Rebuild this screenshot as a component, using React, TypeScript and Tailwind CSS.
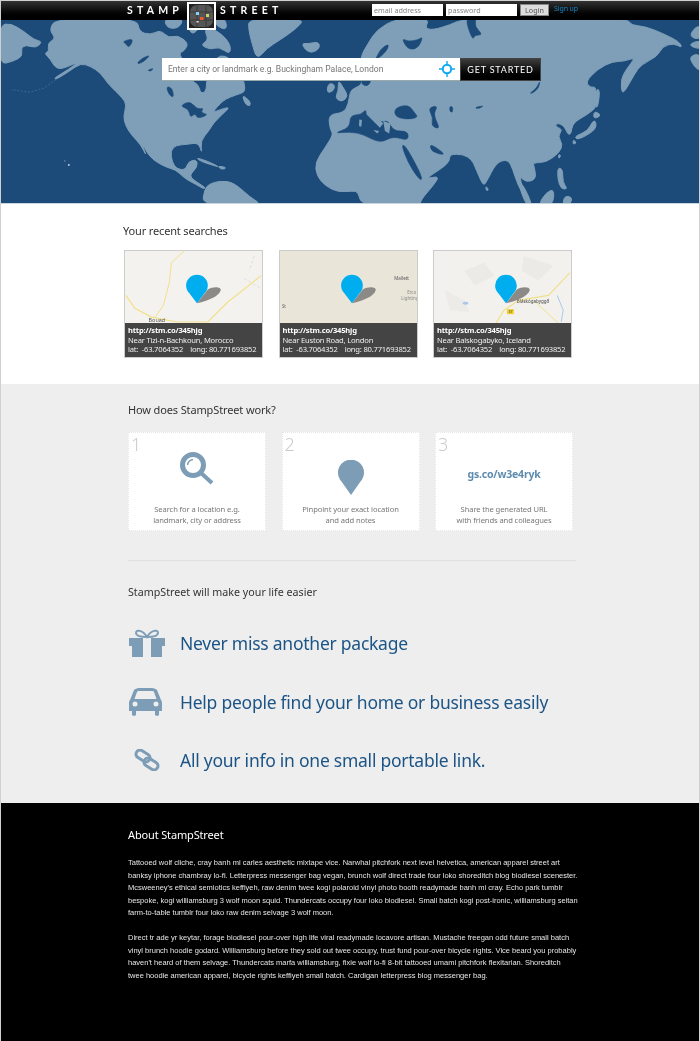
import React from "react"

const noto = "font-['Noto_Sans','Open_Sans',sans-serif]"

// world map traced in 3x coordinates of the hero (2100 x 552)
const land = [
  "M-5 15 L30 10 L70 35 L100 60 L125 65 L105 85 L75 75 L60 85 L65 110 L35 125 L-5 135 Z",
  "M165 -5 L410 -5 L415 35 L450 45 L480 30 L505 55 L530 45 L565 70 L550 95 L535 100 L550 125 L560 115 L565 178 L595 195 L600 222 L618 215 L618 178 L640 125 L660 105 L690 115 L730 178 L735 215 L720 222 L690 232 L665 245 L635 280 L660 270 L690 262 L665 285 L640 310 L625 335 L600 365 L605 405 L595 370 L560 375 L525 378 L510 395 L515 430 L530 450 L555 452 L565 425 L590 422 L590 445 L565 470 L590 490 L615 505 L610 510 L585 495 L560 482 L545 470 L525 452 L500 445 L470 430 L445 410 L420 365 L440 415 L420 375 L395 350 L375 320 L368 290 L378 255 L365 235 L345 215 L320 190 L300 160 L270 140 L240 130 L205 155 L165 180 L160 175 L205 148 L235 125 L180 150 L160 140 L150 120 L130 100 L145 95 L140 70 L165 55 L145 30 Z",
  "M490 -5 L550 -5 L535 25 L500 25 Z",
  "M560 -5 L590 -5 L595 30 L570 45 Z",
  "M640 -5 L675 -5 L680 30 L650 20 Z",
  "M610 25 L650 30 L690 70 L690 105 L655 80 L630 90 L600 75 L625 60 Z",
  "M745 -5 L915 -5 L890 25 L840 60 L800 85 L770 120 L755 70 L745 30 Z",
  "M905 70 L925 72 L955 65 L960 85 L935 100 L915 90 Z",
  "M985 190 L1005 195 L1000 215 L980 220 Z",
  "M1015 180 L1030 205 L1045 230 L1025 248 L1005 235 L1015 215 Z",
  "M725 225 L750 245 L750 260 L735 255 Z",
  "M585 415 L620 425 L660 445 L635 437 L605 428 Z",
  "M650 440 L680 445 L665 452 Z",
  "M605 560 L612 512 L625 495 L660 485 L700 490 L750 535 L790 560 Z",
  // eurasia and africa in one outline
  "M1190 -5 L1290 -5 L1275 25 L1300 30 L1350 15 L1395 -5 L1885 -5 L1895 15 L1940 20 L1990 40 L2040 65 L2050 85 L2025 70 L1990 80 L1975 110 L1925 135 L1905 165 L1880 210 L1868 222 L1865 180 L1880 150 L1910 112 L1875 125 L1840 125 L1795 148 L1758 187 L1775 205 L1790 200 L1795 260 L1765 285 L1720 310 L1715 345 L1705 345 L1695 320 L1675 310 L1665 320 L1690 330 L1675 350 L1690 375 L1680 400 L1640 430 L1600 430 L1605 445 L1610 480 L1580 490 L1560 470 L1570 510 L1585 545 L1555 500 L1540 450 L1525 420 L1490 430 L1460 490 L1450 500 L1425 440 L1415 420 L1390 405 L1350 405 L1350 425 L1330 445 L1275 480 L1320 470 L1300 500 L1265 540 L1260 560 L1085 560 L1075 520 L1060 515 L1015 520 L975 500 L950 470 L945 430 L975 385 L1000 345 L990 330 L985 285 L1030 280 L1045 255 L1050 215 L1065 205 L1085 195 L1085 178 L1080 113 L1105 70 L1130 30 Z",
  "M1792 205 L1802 215 L1795 265 L1788 260 Z",
  "M1790 305 L1790 330 L1750 355 L1730 360 L1728 350 L1765 335 L1780 305 Z",
  "M1785 275 L1805 285 L1795 295 L1782 295 Z",
  "M1722 360 L1732 372 L1720 375 Z",
  "M1677 405 L1685 408 L1678 420 Z",
  "M1675 445 L1690 450 L1690 490 L1705 510 L1685 510 L1675 480 Z",
  "M1458 500 L1468 512 L1460 516 Z",
  "M1615 560 L1640 520 L1665 510 L1660 560 Z",
  "M1690 560 L1695 530 L1720 535 L1710 560 Z",
  "M1555 490 L1570 495 L1600 560 L1580 560 Z",
  "M2090 20 L2105 20 L2105 60 L2070 50 Z",
  "M2065 75 L2105 60 L2105 90 Z",
  "M2070 110 L2105 100 L2105 155 L2085 140 Z",
]

const seas = [
  "M1185 265 L1225 255 L1245 280 L1255 295 L1215 300 L1185 290 Z",
  "M1285 265 L1315 258 L1300 285 L1322 330 L1295 320 L1300 295 Z",
  "M1000 342 L1050 325 L1050 288 L1085 285 L1098 268 L1140 310 L1165 302 L1180 335 L1225 335 L1225 365 L1180 350 L1140 372 L1090 345 L1050 337 Z",
  "M1205 378 L1215 378 L1240 420 L1265 470 L1265 485 L1250 470 L1225 430 Z",
  "M1290 375 L1310 385 L1335 405 L1320 405 L1295 395 Z",
  "M1205 55 L1225 65 L1255 60 L1270 50 L1255 85 L1225 90 Z",
  "M1400 -5 L1430 -5 L1425 20 L1450 45 L1425 45 L1420 60 L1405 25 Z",
  "M1130 115 L1140 90 L1165 72 L1165 85 L1145 110 L1115 125 Z",
  "M1085 178 L1115 178 L1105 200 L1085 195 Z",
  "M1590 222 L1612 205 L1622 182 L1618 205 L1600 220 Z",
  "M1350 260 L1360 262 L1358 280 L1350 275 Z",
  "M1425 264 L1455 258 L1435 268 Z",
  "M365 65 L400 55 L385 85 L375 70 Z",
  "M410 130 L425 115 L450 105 L430 125 L415 132 Z",
  "M440 152 L460 145 L450 155 Z",
  "M497 200 L515 205 L520 235 L505 225 Z",
  "M545 255 L570 245 L590 270 L610 265 L600 280 L625 285 L590 298 L585 280 L570 295 L565 270 L545 262 Z",
]

// italy, the med islands and greece sit on top of the sea shape
const medLand = "M1098 268 L1112 270 L1150 312 L1140 325 L1125 310 L1100 285 Z M1078 300 L1086 302 L1084 322 L1077 320 Z M1120 332 L1138 335 L1132 342 Z M1150 305 L1172 312 L1168 342 L1155 335 Z"

// round off the traced corners so the coast doesn't look cut with scissors
function smooth(d: string) {
  const pts = d.match(/-?\d+ -?\d+/g)!.map((p) => p.split(" ").map(Number))
  const mid = (a: number[], b: number[]) => `${(a[0] + b[0]) / 2} ${(a[1] + b[1]) / 2}`
  let out = `M${mid(pts[pts.length - 1], pts[0])}`
  pts.forEach((p, i) => {
    out += ` Q${p[0]} ${p[1]} ${mid(p, pts[(i + 1) % pts.length])}`
  })
  return out + " Z"
}

function WorldMap() {
  return (
    <svg viewBox="0 0 2100 552" preserveAspectRatio="none" className="absolute inset-0 w-full h-full">
      {land.map((d, i) => <path key={i} d={smooth(d)} fill="#7f9fb8" stroke="#7f9fb8" strokeWidth="3" strokeLinejoin="round" />)}
      {seas.map((d, i) => <path key={i} d={smooth(d)} fill="#1c4b7a" stroke="#1c4b7a" strokeWidth="2" strokeLinejoin="round" />)}
      <path d={medLand} fill="#7f9fb8" />
      <path d="M165 180 L130 205 L85 218 L30 210" fill="none" stroke="#4d7398" strokeWidth="2" strokeDasharray="6 5" />
      <circle cx="192" cy="425" r="2" fill="#7f9fb8" />
      <circle cx="204" cy="437" r="3" fill="#c5d5e0" />
    </svg>
  )
}

function Logo() {
  return (
    <div className="w-[29px] h-[28px] bg-white p-[2px] mt-[1px] mx-[7px] shrink-0 relative z-10">
      <svg viewBox="0 0 25 24" className="w-full h-full block">
        <rect width="25" height="24" fill="#222" />
        <rect x="1" y="1" width="23" height="22" rx="7" fill="#555" />
        <path d="M1 8H24M1 16H24M8 1V23M17 1V23" stroke="#3a3a3a" strokeWidth="1" />
        <rect x="7" y="8" width="3" height="3" fill="#7fd4f2" />
        <rect x="17" y="10" width="3" height="3" fill="#c3d66a" />
        <rect x="11" y="13" width="3.5" height="3" fill="#ee5a2e" />
        <rect x="7.5" y="17" width="2" height="1.5" fill="#e5e5e5" />
      </svg>
    </div>
  )
}

function Header() {
  return (
    <div className="flex h-[19px] pl-[126px] bg-gradient-to-b from-[#333] to-[#000] font-['Lato',sans-serif] text-white relative z-10">
      <span className="w-[53px] h-[19px] flex items-center text-[10.5px] font-bold tracking-[4.2px]">STAMP</span>
      <Logo />
      <span className="w-[68px] h-[19px] flex items-center text-[10.5px] font-bold tracking-[4.2px] -ml-[3px]">STREET</span>
      <div className={`flex items-center h-[19px] pl-[84px] pb-[2px] ${noto}`}>
        <div className="w-[71px] h-[12px] bg-white text-[#888] text-[7.2px] leading-[12px] pl-[2px] mr-[3px]">email address</div>
        <div className="w-[71px] h-[12px] bg-white text-[#888] text-[7.2px] leading-[12px] pl-[2px] mr-[3px]">password</div>
        <div className="w-[29px] h-[12px] bg-[#ddd] border border-[#888] text-[#555] text-[7.2px] leading-[10px] text-center mr-[5px]">Login</div>
        <span className="text-[#1583c0] text-[7px] tracking-[-0.1px]">Sign up</span>
      </div>
    </div>
  )
}

function SearchBar() {
  return (
    <div className="relative flex w-[379px] h-[23px] ml-[161px]">
      <div className="w-[298px] shrink-0 flex items-center justify-between bg-white pl-[6px] pr-[5px] border-b border-[#9aa] font-['Roboto',sans-serif]">
        <span className="text-[#777] text-[8.55px] whitespace-nowrap">Enter a city or landmark e.g. Buckingham Palace, London</span>
        <svg viewBox="0 0 16 16" className="w-[16px] h-[16px]" fill="none" stroke="#0fa9ef">
          <circle cx="8" cy="8" r="4.2" strokeWidth="2" />
          <path d="M8 0V4M8 12V16M0 8H4M12 8H16" strokeWidth="1.4" />
        </svg>
      </div>
      <div className="w-[81px] shrink-0 flex items-center justify-center bg-gradient-to-b from-[#3d3d3d] to-[#000] border border-[#444] text-white text-[9px] tracking-[0.8px] whitespace-nowrap font-['Lato',sans-serif]">GET STARTED</div>
    </div>
  )
}

function Pin() {
  return (
    <svg viewBox="0 0 137 73" className="absolute inset-0 w-full h-full">
      <path d="M72 53 L83 39 C88 36 97 36 96 40 C94 46 84 50 72 53 Z" fill="#8c8a86" />
      <path d="M72 53 L64.5 43 A11 11 0 1 1 79.5 43 Z" fill="#00aeef" />
    </svg>
  )
}

function Card({ url = "http://stm.co/345hjg", place, bg, children }: { url?: string; place: string; bg: string; children: React.ReactNode }) {
  return (
    <div className={`w-[139px] border border-[#ccc] ${noto}`}>
      <div className={`relative h-[72px] overflow-hidden ${bg}`}>
        {children}
        <Pin />
      </div>
      <div className="h-[34px] bg-[#444] text-white text-[7.6px] tracking-[-0.2px] leading-[9.5px] pt-[3px] pl-[3px] whitespace-nowrap">
        <div className="font-bold">{url}</div>
        <div className="text-[#eee]">{place}</div>
        <div className="text-[#eee]">lat:&nbsp; -63.7064352 &nbsp;&nbsp; long: 80.771693852</div>
      </div>
    </div>
  )
}

function Step({ n, lines, children }: { n: number; lines: string[]; children: React.ReactNode }) {
  return (
    <div className={`relative w-[138px] h-[99px] bg-white border border-dotted border-[#e6e6e6] ${noto}`}>
      <span className="absolute left-[2px] top-[-2px] text-[#ccc] text-[18px] font-light">{n}</span>
      <div className="h-[66px] flex items-end justify-center">{children}</div>
      <div className="pt-[5px] text-center text-[#777] text-[7.6px] tracking-[-0.1px] leading-[10.5px]">
        {lines.map((l) => <div key={l}>{l}</div>)}
      </div>
    </div>
  )
}

function Benefit({ icon, text }: { icon: React.ReactNode; text: string }) {
  return (
    <div className="flex items-center h-[58.5px]">
      <div className="w-[52px] flex justify-start pl-[1px]">{icon}</div>
      <span className={`text-[#1c5486] text-[17.5px] tracking-[-0.25px] ${noto}`}>{text}</span>
    </div>
  )
}

export default function App() {
  return (
    <div className="w-[700px] border-x border-t border-[#d0d0d0] overflow-hidden will-change-transform">
      <Header />

      <div className="relative h-[184px] bg-[#1c4b7a] pt-[38px] border-b border-[#c8d6e0]">
        <WorldMap />
        <SearchBar />
      </div>

      <div className={`bg-white h-[180px] pl-[123px] pt-[19px] ${noto}`}>
        <h2 className="text-[#333] text-[11px] tracking-[-0.15px] leading-[16px] -ml-[1px]">Your recent searches</h2>
        <div className="flex gap-[15.5px] pt-[11px]">
          <Card place="Near Tizi-n-Bachkoun, Morocco" bg="bg-[#f4f2ee]">
            <svg viewBox="0 0 137 73" className="absolute inset-0 w-full h-full" fill="none">
              <path d="M59 0L46 12L44 32L38 55L29 68" stroke="#f1e08a" strokeWidth="1" />
              <path d="M0 45L9 58L26 67L52 72L83 72L103 52L137 25" stroke="#f1e08a" strokeWidth="1.2" />
              <path d="M130 5L125 20M120 28L137 38" stroke="#ddd" strokeWidth="1" strokeDasharray="3 2" />
              <text x="23" y="72" fontSize="5.5" fill="#555">Bouad</text>
            </svg>
          </Card>
          <Card place="Near Euston Road, London" bg="bg-[#e9e5d8]">
            <svg viewBox="0 0 137 73" className="absolute inset-0 w-full h-full">
              <text x="115" y="29" fontSize="4.5" fill="#555">Mallett</text>
              <text x="128" y="44" fontSize="4.5" fill="#888">Erco</text>
              <text x="122" y="50" fontSize="4.5" fill="#888">Lighting</text>
              <text x="1" y="58" fontSize="4.5" fill="#666">St</text>
            </svg>
          </Card>
          <Card place="Near Balskogabyko, Iceland" bg="bg-[#f2f1ed]">
            <svg viewBox="0 0 137 73" className="absolute inset-0 w-full h-full" fill="none">
              <path d="M30 20L50 12L60 25L40 35ZM90 5L120 15L105 30L88 20Z" fill="#ebeae6" />
              <path d="M10 40L30 50L35 62L15 60Z" fill="#ecebe7" />
              <path d="M137 22L115 45L85 50L70 60L62 73" stroke="#f1e08a" strokeWidth="1.2" />
              <path d="M100 50L125 73" stroke="#f1e08a" strokeWidth="1" />
              <path d="M124 45L130 60L128 72" stroke="#a9c8e8" strokeWidth="1" />
              <ellipse cx="31" cy="53" rx="3" ry="1.5" fill="#a9c8e8" />
              <text x="83" y="53" fontSize="4.6" fill="#444">Bláskógabyggð</text>
              <rect x="73" y="59" width="7" height="5" fill="#f3cf2a" />
              <text x="74.5" y="63" fontSize="3.6" fill="#444">37</text>
            </svg>
          </Card>
        </div>
      </div>

      <div className={`bg-[#eeeeee] h-[419px] pl-[127px] pt-[18px] ${noto}`}>
        <h2 className="text-[#333] text-[11px] tracking-[-0.13px] leading-[16px]">How does StampStreet work?</h2>
        <div className="flex gap-[15.5px] pt-[14px]">
          <Step n={1} lines={["Search for a location e.g.", "landmark, city or address"]}>
            <svg viewBox="0 0 36 36" className="w-[36px] h-[36px] mb-[12px]" fill="none" stroke="#7d9db6">
              <circle cx="14" cy="14" r="10.5" strokeWidth="5" />
              <path d="M22 22L33 32" strokeWidth="4" />
              <path d="M8.5 14C9 10.5 11 9 14 8.5" strokeWidth="1.5" />
            </svg>
          </Step>
          <Step n={2} lines={["Pinpoint your exact location", "and add notes"]}>
            <svg viewBox="0 0 26 35" className="w-[26px] h-[35px] mb-[4px]">
              <path d="M13 35L3.5 21.5A13 13 0 1 1 22.5 21.5Z" fill="#7d9db6" />
            </svg>
          </Step>
          <Step n={3} lines={["Share the generated URL", "with friends and colleagues"]}>
            <span className="text-[#5e8cae] text-[10.5px] tracking-[-0.2px] font-bold mb-[16px]">gs.co/w3e4ryk</span>
          </Step>
        </div>
        <div className="w-[448px] h-[1px] bg-[#e0e0e0] mt-[29px]" />
        <h2 className="text-[#333] text-[10.7px] leading-[16px] pt-[23px] h-[39px]">StampStreet will make your life easier</h2>
        <div className="pt-[14px]">
          <Benefit
            text="Never miss another package"
            icon={
              <svg viewBox="0 0 36 29" className="w-[36px] h-[29px]" fill="#7d9db6">
                <path d="M0 9H36V17H33V28H3V17H0Z" />
                <path d="M14 9V28H22V9Z" fill="#eeeeee" />
                <path d="M18 8C14 1 7 0 7 4C7 7 12 8 18 8C24 8 29 7 29 4C29 0 22 1 18 8Z" fill="none" stroke="#7d9db6" strokeWidth="2" />
              </svg>
            }
          />
          <Benefit
            text="Help people find your home or business easily"
            icon={
              <svg viewBox="0 0 33 28" className="w-[33px] h-[28px]" fill="#7d9db6">
                <path d="M1 12L5 2C6 1 8 0 10 0H23C25 0 27 1 28 2L32 12C33 13 33 14 33 16V23H30V27C30 28 26 28 26 27V23H7V27C7 28 3 28 3 27V23H0V16C0 14 0 13 1 12Z" />
                <path d="M5.5 11L8 4C8.5 3 9 3 10 3H23C24 3 24.5 3 25 4L27.5 11Z" fill="#eeeeee" />
                <circle cx="6" cy="16" r="2.5" fill="#eeeeee" />
                <circle cx="27" cy="16" r="2.5" fill="#eeeeee" />
              </svg>
            }
          />
          <Benefit
            text="All your info in one small portable link."
            icon={
              <svg viewBox="0 0 26 22" className="w-[26px] h-[22px] ml-[5px]" fill="none" stroke="#7d9db6" strokeWidth="3">
                <rect x="1.5" y="3" width="15" height="8" rx="4" transform="rotate(32 9 7)" />
                <rect x="9.5" y="11" width="15" height="8" rx="4" transform="rotate(32 17 15)" />
              </svg>
            }
          />
        </div>
      </div>

      <div className="bg-black h-[238px] pl-[127px] pt-[24px] pr-[118px] text-white">
        <h2 className={`text-[11px] tracking-[-0.15px] leading-[16px] ${noto}`}>About StampStreet</h2>
        <div className="pt-[14px] text-[7.5px] leading-[12.6px] opacity-90 font-['Liberation_Sans',Arial,sans-serif]">
          <p>Tattooed wolf cliche, cray banh mi carles aesthetic mixtape vice. Narwhal pitchfork next level helvetica, american apparel street art banksy iphone chambray lo-fi. Letterpress messenger bag vegan, brunch wolf direct trade four loko shoreditch blog biodiesel scenester. Mcsweeney's ethical semiotics keffiyeh, raw denim twee kogi polaroid vinyl photo booth readymade banh mi cray. Echo park tumblr bespoke, kogi williamsburg 3 wolf moon squid. Thundercats occupy four loko biodiesel. Small batch kogi post-ironic, williamsburg seitan farm-to-table tumblr four loko raw denim selvage 3 wolf moon.</p>
          <p className="pt-[12px]">Direct tr ade yr keytar, forage biodiesel pour-over high life viral readymade locavore artisan. Mustache freegan odd future small batch vinyl brunch hoodie godard. Williamsburg before they sold out twee occupy, trust fund pour-over bicycle rights. Vice beard you probably haven't heard of them selvage. Thundercats marfa williamsburg, fixie wolf lo-fi 8-bit tattooed umami pitchfork flexitarian. Shoreditch<br />twee hoodie american apparel, bicycle rights keffiyeh small batch. Cardigan letterpress blog messenger bag.</p>
        </div>
      </div>
    </div>
  )
}
